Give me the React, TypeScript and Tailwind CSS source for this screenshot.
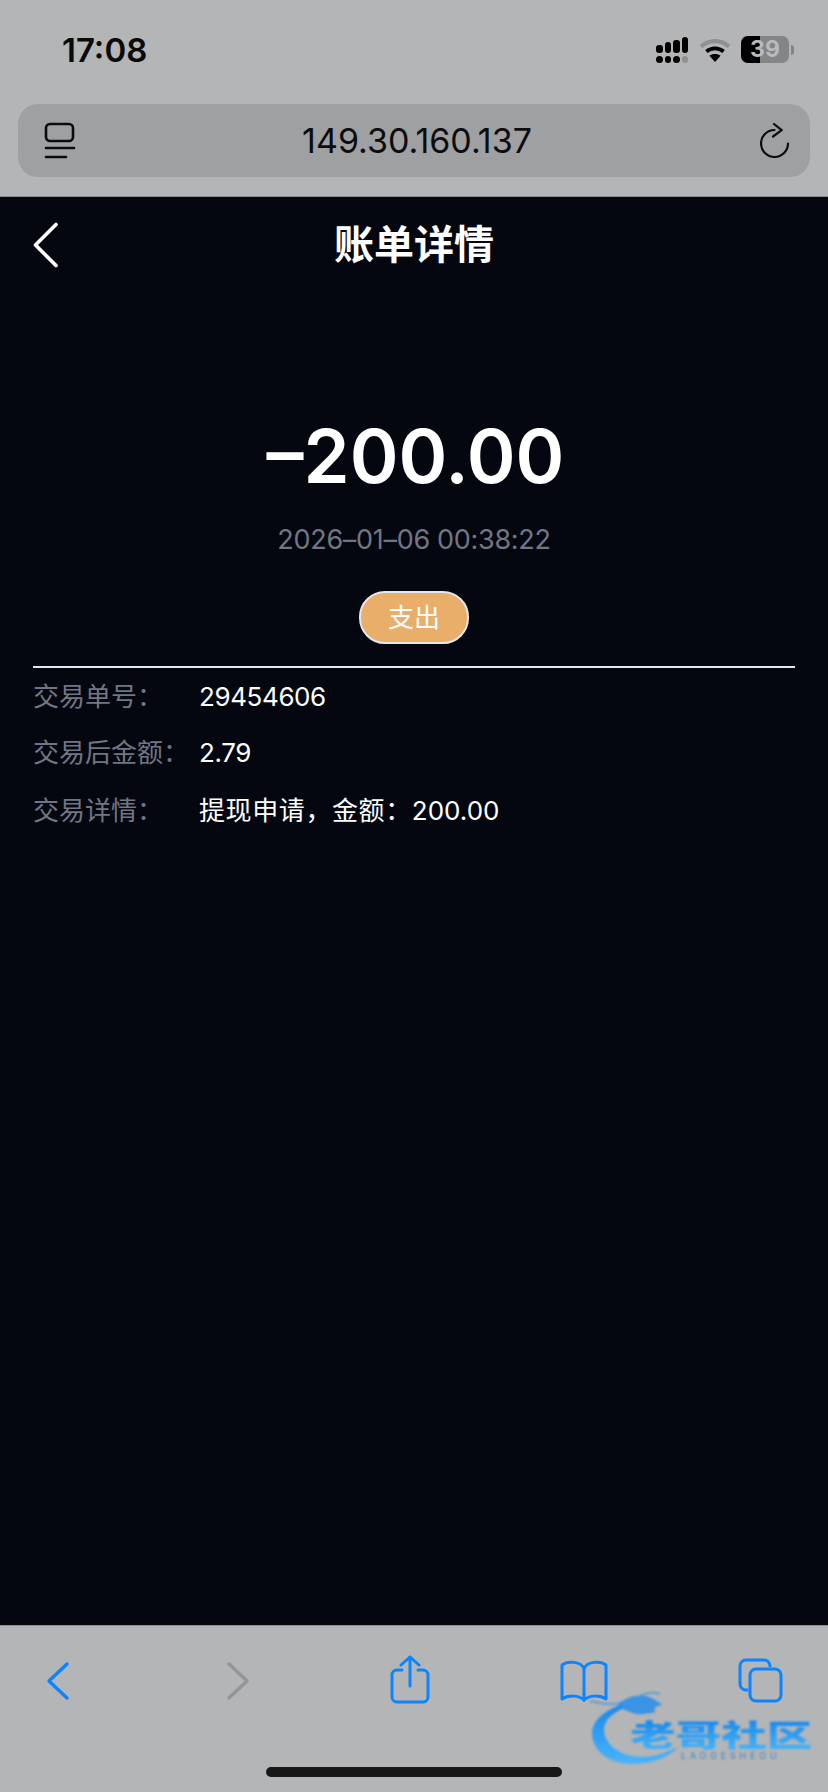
import type { ReactNode } from "react";

const SANS = "font-['Inter','Noto_Sans_CJK_SC',sans-serif]";

function CellBars() {
  const bars = [8, 11, 13, 16];
  return (
    <div className="flex gap-[2px]">
      {bars.map((h, i) => (
        <div key={i} className="flex h-[26px] w-[6.5px] flex-col justify-end">
          <div className="mb-[3px] w-full rounded-[3px] bg-black" style={{ height: h }} />
          <div className={`h-[7px] w-full rounded-full ${i === 3 ? "bg-[#8f9092]" : "bg-black"}`} />
        </div>
      ))}
    </div>
  );
}

function Wifi() {
  return (
    <svg width="32" height="26" viewBox="0 0 32 26" fill="none">
      <path d="M2 9.5C10 2.2 22 2.2 30 9.5" stroke="#8f9092" strokeWidth="4.2" />
      <path d="M7.4 14.5C12.5 10.3 19.5 10.3 24.6 14.5" stroke="#000" strokeWidth="3.8" />
      <path d="M16 25l-5.6-6.2c3.2-2.3 8-2.3 11.2 0z" fill="#000" />
    </svg>
  );
}

function Battery() {
  return (
    <div className="flex items-center gap-[2px]">
      <div className="relative h-[27px] w-[48px] overflow-hidden rounded-[7px] bg-[#848587]">
        <div className="absolute inset-y-0 left-0 w-[19px] bg-black" />
        <span className="absolute inset-0 flex items-center justify-center text-[23px] leading-none font-bold text-[#b9babc]">
          39
        </span>
      </div>
      <div className="h-[10px] w-[3px] rounded-r-full bg-[#848587]" />
    </div>
  );
}

function TabsIcon() {
  return (
    <svg width="32" height="38" viewBox="0 0 32 38" fill="none" stroke="#0c0c0e" strokeLinecap="round">
      <rect x="2" y="2" width="27" height="17" rx="4" strokeWidth="2.6" />
      <path d="M2 26h28" strokeWidth="2.6" />
      <path d="M2 35h20" strokeWidth="2.6" />
    </svg>
  );
}

function ReloadIcon() {
  return (
    <svg width="30" height="36" viewBox="0 0 30 36" fill="none" stroke="#0c0c0e" strokeWidth="2.2" strokeLinecap="round" strokeLinejoin="round">
      <path d="M14.500 7A13.500 13.500 0 1 0 28 20.500" />
      <path d="M14 1l7.700 6.200L13 13.500" />
    </svg>
  );
}

function ToolbarIcons() {
  return (
    <div className="relative h-[80px] w-full">
      {/* back */}
      <svg className="absolute left-[46px] top-[35px]" width="24" height="40" viewBox="0 0 24 40" fill="none" stroke="#0a84ff" strokeWidth="3.4" strokeLinecap="round" strokeLinejoin="round">
        <path d="M21 3L3 20l18 17" />
      </svg>
      {/* forward */}
      <svg className="absolute left-[226px] top-[35px]" width="24" height="40" viewBox="0 0 24 40" fill="none" stroke="#949597" strokeWidth="3.4" strokeLinecap="round" strokeLinejoin="round">
        <path d="M3 3l18 17L3 37" />
      </svg>
      {/* share */}
      <svg className="absolute left-[390px] top-[29px]" width="40" height="50" viewBox="0 0 40 50" fill="none" stroke="#0a84ff" strokeWidth="3" strokeLinecap="round" strokeLinejoin="round">
        <path d="M12 15H7a5 5 0 0 0-5 5v22a5 5 0 0 0 5 5h26a5 5 0 0 0 5-5V20a5 5 0 0 0-5-5h-5" />
        <path d="M20 31V2" />
        <path d="M11 10l9-8 9 8" />
      </svg>
      {/* bookmarks */}
      <svg className="absolute left-[560px] top-[34px]" width="48" height="42" viewBox="0 0 48 42" fill="none" stroke="#0a84ff" strokeWidth="3" strokeLinecap="round" strokeLinejoin="round">
        <path d="M24 8C20 1.500 8 0.500 2 5v34c6-4 17-4 22 1 5-5 16-5 22-1V5C40 0.500 28 1.500 24 8z" />
        <path d="M24 8v32" />
      </svg>
      {/* tabs */}
      <svg className="absolute left-[738px] top-[32px]" width="45" height="45" viewBox="0 0 45 45" fill="none" stroke="#0a84ff" strokeWidth="3" strokeLinejoin="round">
        <path d="M10 32H8a6 6 0 0 1-6-6V8a6 6 0 0 1 6-6h18a6 6 0 0 1 6 6v1" />
        <rect x="12" y="11" width="31" height="32" rx="6" />
      </svg>
    </div>
  );
}

function Watermark() {
  return (
    <div className="pointer-events-none absolute left-[590px] top-[1690px] h-[80px] w-[230px] blur-[0.9px]">
      <svg className="absolute left-0 top-0" width="100" height="80" viewBox="0 0 100 80" fill="none">
        <defs>
          <linearGradient id="dragon" x1="0" y1="0" x2="0" y2="1">
            <stop offset="0" stopColor="#1488ee" />
            <stop offset="1" stopColor="#4ab4fb" />
          </linearGradient>
        </defs>
        <path d="M30 15C12 22 2 32 2 43c0 17 16 31 40 31 18 0 36-6 46-17-12 6-24 10-36 10-20 0-36-11-38-25-1-10 6-18 20-24z" fill="url(#dragon)" />
        <path d="M28 14c8-6 16-9 22-8 6-1 14 2 22 9-6 1-10 3-6 7-10 2-18 4-26 0-6-2-10-4-12-8z" fill="#1a8cf0" opacity="0.8" />
        <path d="M0 11c10 3 22 4 32 2M50 6c6-3 14-4 20-2" stroke="#1a8cf0" strokeWidth="2" opacity="0.55" />
      </svg>
      <span className="absolute left-[40px] top-[30px] origin-left scale-x-[1.52] whitespace-nowrap bg-gradient-to-b from-[#1288ee] to-[#45b4fb] bg-clip-text text-[30px] leading-none font-black text-transparent">
        老哥社区
      </span>
      <span className="absolute left-[91px] top-[61px] text-[9px] leading-none tracking-[3.8px] text-[#3e86c8]">
        LAOGESHEOU
      </span>
    </div>
  );
}

function DetailRow({ label, children, className = "" }: { label: string; children: ReactNode; className?: string }) {
  return (
    <div className={`flex items-center text-[26px] leading-[38px] ${className}`}>
      <span className="w-[166px] shrink-0 text-[#717684]">{label}</span>
      <span className="text-white">{children}</span>
    </div>
  );
}

export default function App() {
  return (
    <div className={`relative flex h-[1792px] w-[828px] flex-col overflow-hidden bg-[#04070f] ${SANS}`}>
      {/* Safari top chrome */}
      <header className="h-[197px] shrink-0 border-b border-[#8c8d8f] bg-[#b4b5b7] px-[18px]">
        <div className="flex h-[104px] items-start justify-between pt-[30px]">
          <span className="ml-[44px] text-[33px] leading-[40px] font-semibold text-[#0a0a0a]">17:08</span>
          <div className="mt-[6px] mr-[16px] flex items-center">
            <CellBars />
            <div className="mr-[10px] ml-[11px]">
              <Wifi />
            </div>
            <Battery />
          </div>
        </div>
        <div className="grid h-[73px] grid-cols-[1fr_auto_1fr] items-center rounded-[20px] bg-[#9fa0a2] pr-[20px] pl-[26px]">
          <TabsIcon />
          <span className="text-[34px] leading-none text-[#0c0c0e]">149.30.160.137</span>
          <div className="justify-self-end">
            <ReloadIcon />
          </div>
        </div>
      </header>

      {/* Page */}
      <main className="flex-1 px-[33px]">
        <div className="relative flex h-[100px] items-center justify-center pb-[4px]">
          <svg className="absolute left-0 top-[25px]" width="26" height="46" viewBox="0 0 26 46" fill="none" stroke="#fff" strokeWidth="3.6" strokeLinecap="round" strokeLinejoin="round">
            <path d="M23 2.500L2.500 23 23 43.500" />
          </svg>
          <h1 className="text-[40px] leading-none font-bold text-white">账单详情</h1>
        </div>

        <div className="flex flex-col items-center pt-[113px]">
          <div className="ml-[3px] text-[74px] leading-[92px] font-semibold text-white">–200.00</div>
          <div className="mt-[21px] text-[27px] leading-[34px] tracking-[-0.3px] text-[#717684]">2026–01–06 00:38:22</div>
          <div className="mt-[34px] flex h-[53px] w-[110px] items-center justify-center rounded-[26px] border-2 border-[#e5e7eb] bg-[#e9ae6a] text-[26px] text-white">
            支出
          </div>
        </div>

        <div className="mt-[22px] h-[2px] w-full bg-[#e5e7eb]" />

        <div className="mt-[10px] flex flex-col gap-[18px]">
          <DetailRow label={"交易单号\uFF1A"}>
            <span className="tracking-[-0.4px]">29454606</span>
          </DetailRow>
          <DetailRow label={"交易后金额\uFF1A"}>
            <span className="tracking-[-0.4px]">2.79</span>
          </DetailRow>
          <DetailRow label={"交易详情\uFF1A"} className="mt-[2px]">
            <span className="tracking-[0.6px]">{"提现申请\uFF0C金额\uFF1A"}</span>200.00
          </DetailRow>
        </div>
      </main>

      {/* Safari bottom toolbar */}
      <footer className="relative h-[167px] shrink-0 border-t border-[#8c8d8f] bg-[#b4b5b7]">
        <ToolbarIcons />
        <div className="absolute bottom-[15px] left-[266px] h-[10px] w-[296px] rounded-full bg-[#171717]" />
      </footer>

      <Watermark />
    </div>
  );
}
